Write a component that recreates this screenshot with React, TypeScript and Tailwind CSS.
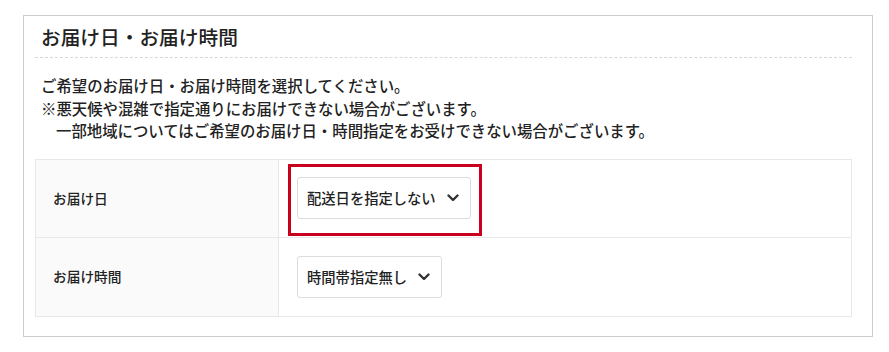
const font = { fontFamily: '"Noto Sans CJK JP", "Noto Sans", sans-serif' }

function Chevron() {
  return (
    <svg width="12" height="8" viewBox="0 0 12 8" fill="none" className="text-[#333333]">
      <polyline points="1.5,1.5 6,6 10.5,1.5" stroke="currentColor" strokeWidth="2.4" strokeLinecap="round" strokeLinejoin="round" />
    </svg>
  )
}

function SelectBox({ label, width }: { label: string; width: string }) {
  return (
    <div
      className={`flex h-[42px] items-center justify-between rounded-[3px] border border-[#dddddd] bg-white pl-[9px] pr-[11px] ${width}`}
    >
      <span className="text-[14.3px] font-medium text-[#222222]">{label}</span>
      <Chevron />
    </div>
  )
}

export default function App() {
  return (
    <div className="min-h-screen bg-white pt-[15px] pl-[23px]" style={font}>
      <div className="w-[850px] border border-[#cccccc] pl-[11px] pr-[20px] pb-[19px]">
        {/* Heading */}
        <div className="border-b border-dashed border-[#d8d8d8] px-[6px] pt-[9px] pb-[8px]">
          <h2 className="text-[19.7px] leading-[24px] font-medium text-[#222222]">お届け日・お届け時間</h2>
        </div>

        {/* Notes */}
        <div className="px-[6px] pt-[16px] pb-[17px] text-[15.4px] leading-[22.5px] font-medium text-[#222222]">
          <p>ご希望のお届け日・お届け時間を選択してください。</p>
          <p>※悪天候や混雑で指定通りにお届けできない場合がございます。</p>
          <p className="pl-[15px]">一部地域についてはご希望のお届け日・時間指定をお受けできない場合がございます。</p>
        </div>

        {/* Table */}
        <div className="border border-[#e8e8e8]">
          <div className="flex h-[78px] border-b border-[#e8e8e8]">
            <div className="flex w-[243px] items-center border-r border-[#e8e8e8] bg-[#fafafa] pl-[17px] text-[13.7px] font-medium text-[#222222]">
              お届け日
            </div>
            <div className="flex items-center pl-[18px]">
              <div className="relative">
                <SelectBox label="配送日を指定しない" width="w-[174px]" />
                <div className="pointer-events-none absolute -top-[13px] -left-[9px] h-[72px] w-[194px] border-[3px] border-[#c8001e]" />
              </div>
            </div>
          </div>
          <div className="flex h-[78px]">
            <div className="flex w-[243px] items-center border-r border-[#e8e8e8] bg-[#fafafa] pl-[17px] text-[13.7px] font-medium text-[#222222]">
              お届け時間
            </div>
            <div className="flex items-center pl-[18px]">
              <SelectBox label="時間帯指定無し" width="w-[145px]" />
            </div>
          </div>
        </div>
      </div>
    </div>
  )
}
